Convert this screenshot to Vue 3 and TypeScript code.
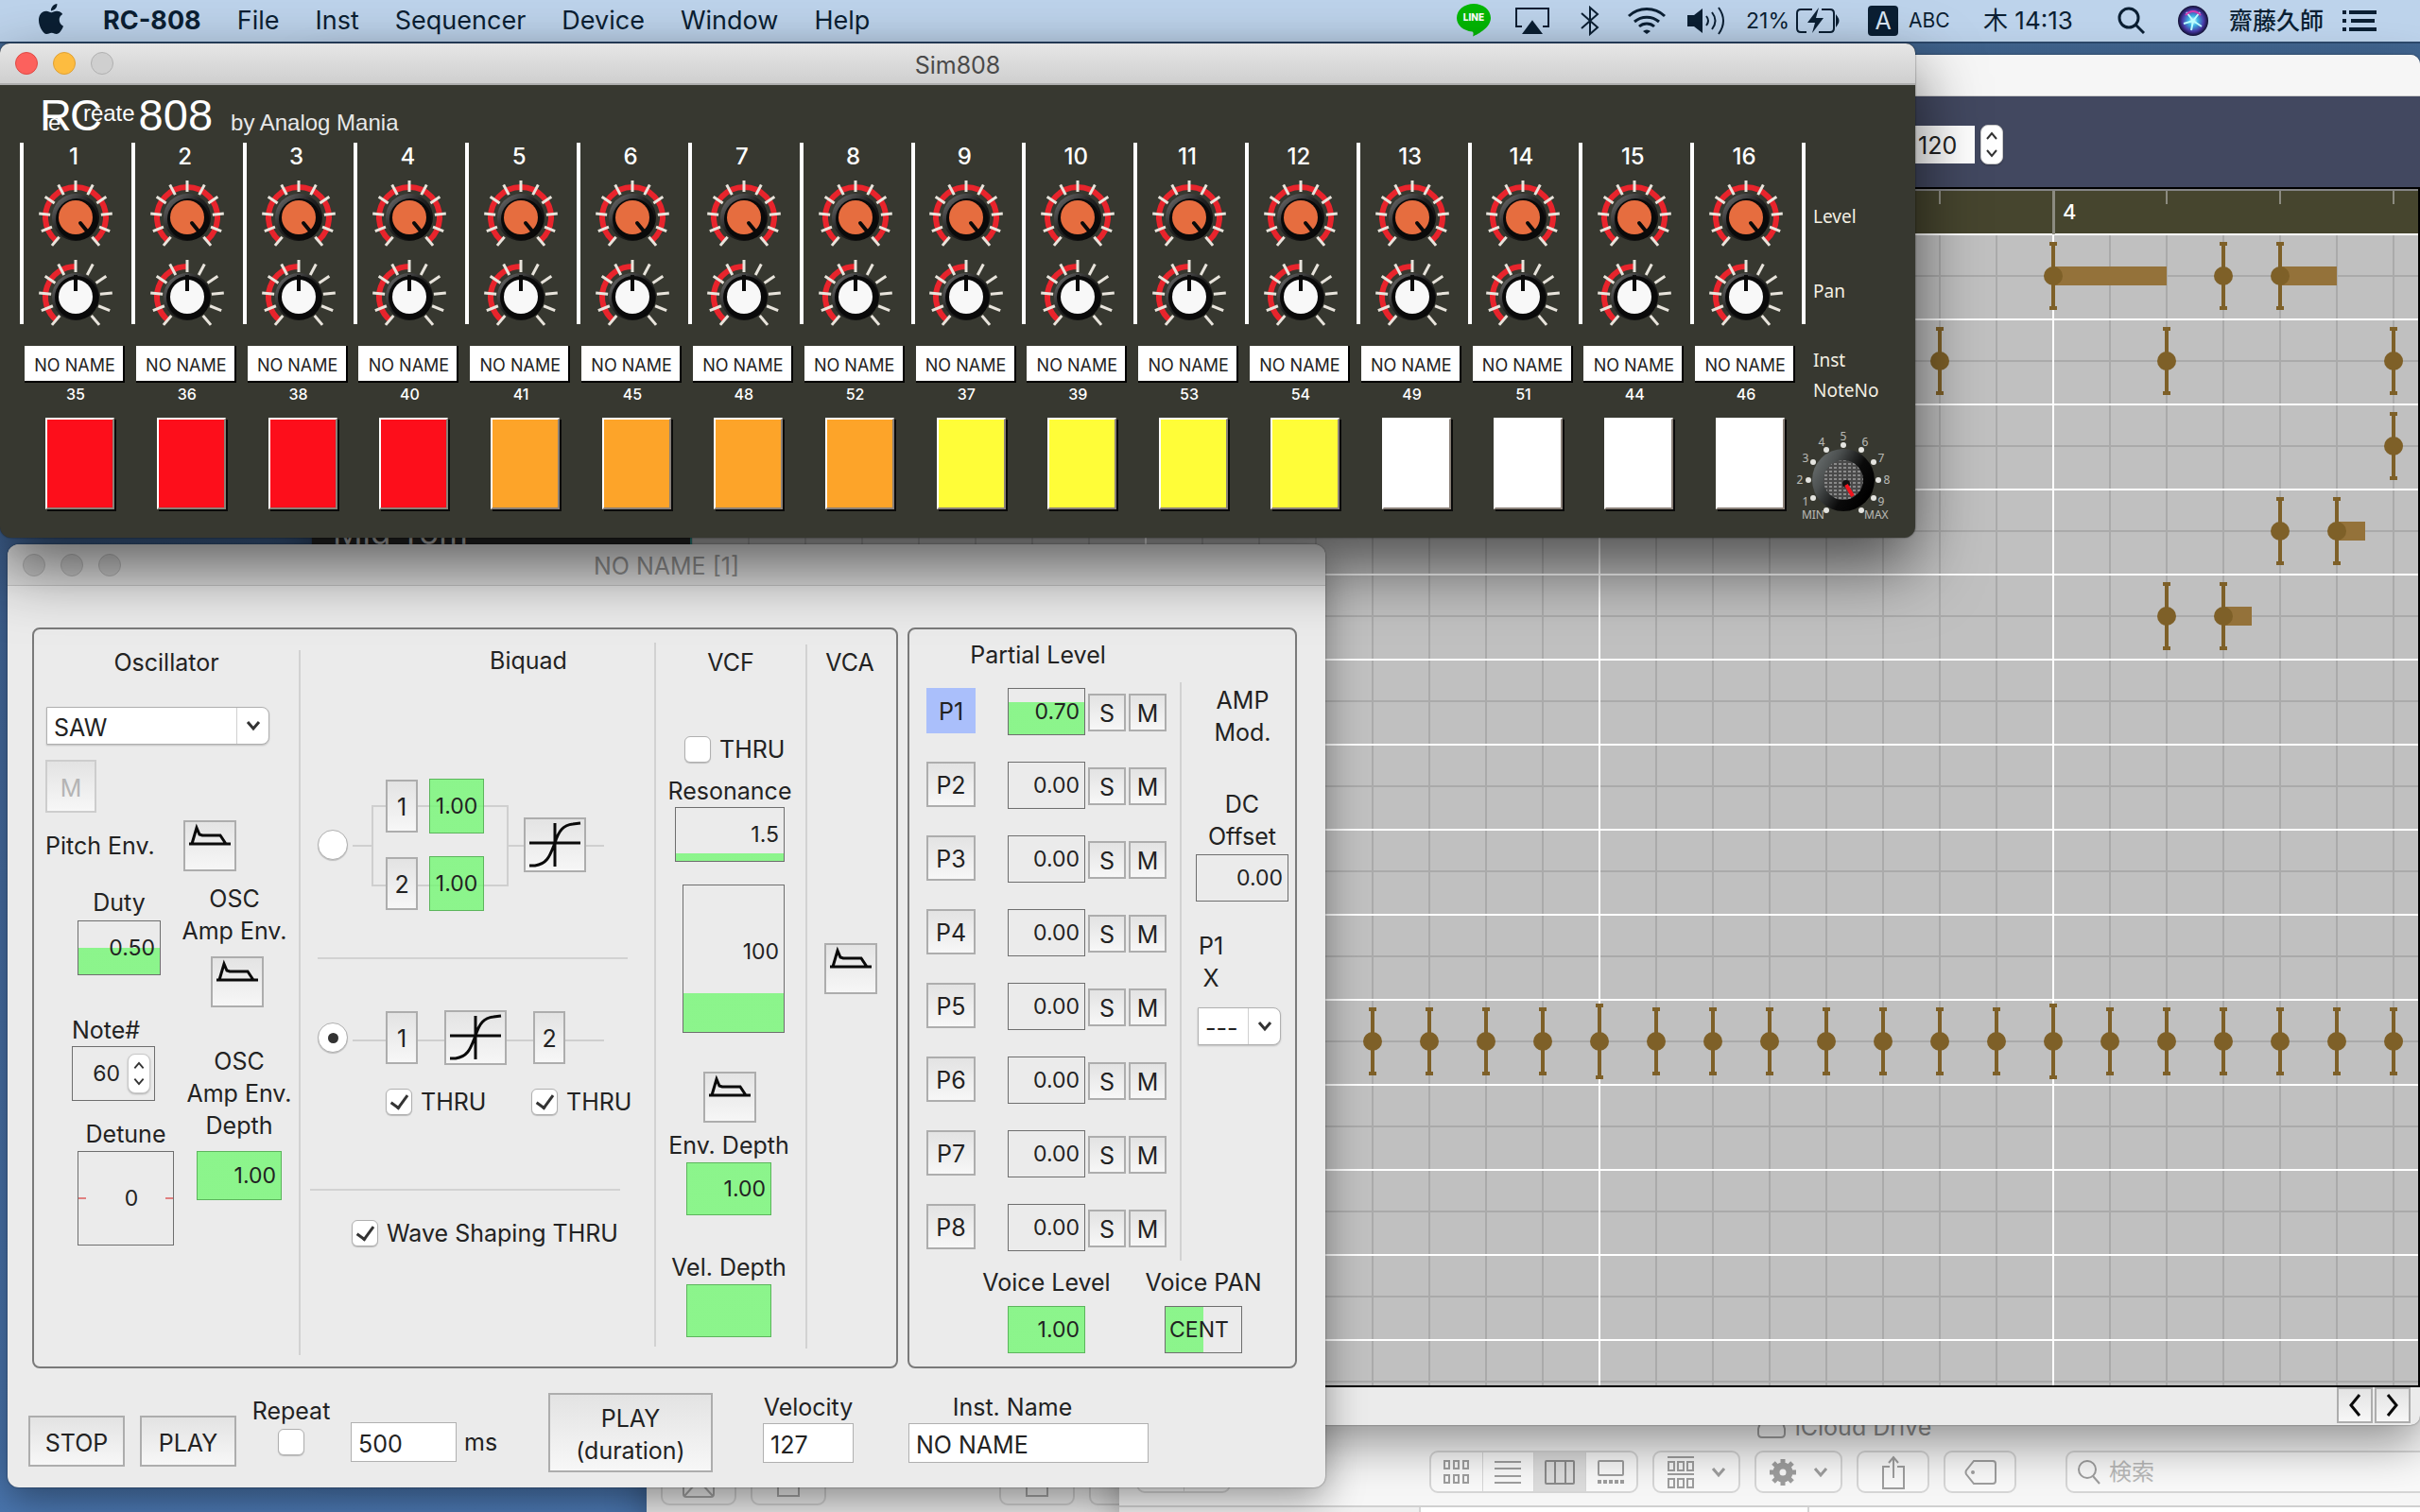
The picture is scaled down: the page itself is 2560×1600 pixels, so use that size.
<script setup lang="ts">
interface Channel {
  note: number
  color: string
}
interface Note {
  x: number
  y: number
  length?: number
  reach?: number
}

const menus: string[] = ['File', 'Inst', 'Sequencer', 'Device', 'Window', 'Help']

const noteNumbers: number[] = [35, 36, 38, 40, 41, 45, 48, 52, 37, 39, 53, 54, 49, 51, 44, 46]
const padColors: string[] = ['#fd0e1b', '#fda429', '#fffd38', '#ffffff']
const channels: Channel[] = noteNumbers.map((note, i) => ({
  note,
  color: padColors[Math.floor(i / 4)],
}))

// Tick marks run from -140 to 140 degrees in steps of 28.
const ticks: number[] = Array.from({ length: 11 }, (_, i) => -140 + i * 28)

const polar = (angle: number, r: number, cx = 50, cy = 50) => {
  const a = (angle * Math.PI) / 180
  return { x: Math.round(cx + r * Math.sin(a)), y: Math.round(cy - r * Math.cos(a)) }
}
const volumeMarks = ['', '1', '2', '3', '4', '5', '6', '7', '8', '9', ''].map((label, i) => {
  const angle = -150 + i * 30
  return { label, dot: polar(angle, 37), text: polar(angle, 46) }
})

// Sequencer canvas, in desktop coordinates.
const columns: number[] = Array.from({ length: 31 }, (_, i) => 732 + i * 60)
const rows: number[] = Array.from({ length: 13 }, (_, i) => 338 + i * 90)
const halfRows: number[] = Array.from({ length: 14 }, (_, i) => 292 + i * 90)
const bars: number[] = [1212, 1692, 2172]
const rulerTicks: number[] = Array.from({ length: 16 }, (_, i) => 732 + i * 120)

const notes: Note[] = [
  { x: 2172, y: 292, length: 120 },
  { x: 2352, y: 292 },
  { x: 2412, y: 292, length: 60 },
  { x: 2052, y: 382 },
  { x: 2292, y: 382 },
  { x: 2532, y: 382 },
  { x: 2532, y: 472 },
  { x: 2412, y: 562 },
  { x: 2472, y: 562, length: 30 },
  { x: 2292, y: 652 },
  { x: 2352, y: 652, length: 30 },
  ...Array.from({ length: 19 }, (_, i) => {
    const x = 1452 + i * 60
    return { x, y: 1102, reach: bars.includes(x) ? 40 : 36 }
  }),
]

const partials = [0.7, 0, 0, 0, 0, 0, 0, 0].map((level, i) => ({ name: `P${i + 1}`, level }))

const fill = (ratio: number) => ({
  backgroundImage: `linear-gradient(to top, rgba(116,247,116,.8) ${ratio * 100}%, transparent ${ratio * 100}%)`,
})
</script>

<template>
  <div class="desktop">
    <header class="menubar">
      <svg class="apple" viewBox="0 0 24 24" aria-hidden="true">
        <path
          fill="#0b1f33"
          d="M12.152 6.896c-.948 0-2.415-1.078-3.96-1.04-2.04.027-3.91 1.183-4.961 3.014-2.117 3.675-.546 9.103 1.519 12.09 1.013 1.454 2.208 3.09 3.792 3.039 1.52-.065 2.09-.987 3.935-.987 1.831 0 2.35.987 3.96.948 1.637-.026 2.676-1.48 3.676-2.948 1.156-1.688 1.636-3.325 1.662-3.415-.039-.013-3.182-1.221-3.22-4.857-.026-3.04 2.48-4.494 2.597-4.559-1.429-2.09-3.623-2.324-4.39-2.376-2-.156-3.675 1.09-4.61 1.09zM15.53 3.83c.843-1.012 1.4-2.427 1.245-3.83-1.207.052-2.662.805-3.532 1.818-.78.896-1.454 2.338-1.273 3.714 1.338.104 2.715-.688 3.559-1.701"
        />
      </svg>
      <nav class="menus">
        <strong>RC-808</strong>
        <a v-for="m in menus" :key="m" href="#">{{ m }}</a>
      </nav>
      <div class="status">
        <svg width="36" height="36" viewBox="0 0 36 36">
          <path fill="#04b804" d="M18 0C8 0 0 6.500 0 15c0 7.500 6.500 13.500 16.500 14.500 1.500.4 1.200 3 .6 5C23 32 36 25 36 15 36 6.500 28 0 18 0z" />
          <text x="18" y="18" text-anchor="middle" font-size="10" font-weight="800" fill="#fff">LINE</text>
        </svg>
        <svg class="s-air" width="36" height="30" viewBox="0 0 36 30" fill="none" stroke="#0b1f33" stroke-width="2">
          <path d="M7 21H1V2h34v19h-6" /><path d="M18 16l9 12H9z" fill="#0b1f33" />
        </svg>
        <svg class="s-bt" width="20" height="32" viewBox="0 0 20 32" fill="none" stroke="#0b1f33" stroke-width="2">
          <path d="M1 8l17 15-8 7V2l8 7L1 24" />
        </svg>
        <svg class="s-wifi" width="42" height="30" viewBox="0 0 42 30" fill="none" stroke="#0b1f33" stroke-width="3">
          <path d="M2 10a28 28 0 0 1 38 0M8 16a20 20 0 0 1 26 0M13 21a12 12 0 0 1 16 0" />
          <path d="M21 29l-4-3a6 6 0 0 1 8 0z" fill="#0b1f33" stroke="none" />
        </svg>
        <svg class="s-vol" width="41" height="32" viewBox="0 0 41 32" fill="none" stroke="#0b1f33" stroke-width="2">
          <path d="M1 10h7l9-7v26l-9-7H1z" fill="#0b1f33" stroke="none" />
          <path d="M21 11q4 5 0 10M27 7q7 9 0 18M34 2q10 14 0 28" />
        </svg>
        <span class="s-pct">21%</span>
        <svg class="s-bat" width="46" height="28" viewBox="0 0 46 28" fill="none" stroke="#0b1f33" stroke-width="2">
          <path d="M17 2H5q-4 0-4 4v16q0 4 4 4h6M27 2h9q4 0 4 4v16q0 4-4 4H24" />
          <path d="M24 0L12 16h8l-3 11 12-16h-8z" fill="#0b1f33" stroke="none" />
          <path d="M43 10q3 4 0 8z" fill="#0b1f33" />
        </svg>
        <span class="s-key">A</span>
        <span class="s-abc">ABC</span>
        <span class="s-date">木 14:13</span>
        <svg class="s-search" width="29" height="30" viewBox="0 0 29 30" fill="none" stroke="#0b1f33" stroke-width="3">
          <circle cx="12" cy="12" r="10" /><path d="M19 19l9 9" />
        </svg>
        <svg class="s-siri" width="32" height="32" viewBox="0 0 32 32">
          <defs>
            <radialGradient id="siri"><stop offset="0" stop-color="#fff" /><stop offset=".3" stop-color="#3bb8e6" /><stop offset=".7" stop-color="#4a3aa8" /><stop offset="1" stop-color="#101030" /></radialGradient>
          </defs>
          <circle cx="16" cy="16" r="16" fill="url(#siri)" />
          <path d="M16 16L9 7M16 16l7-9M16 16l-10 3M16 16l9 6M16 16l-2 10" stroke="#bff" stroke-width="2" />
          <path d="M8 10q8-8 16 0" stroke="#d33bb0" stroke-width="2" fill="none" />
        </svg>
        <span class="s-name">齋藤久師</span>
        <svg class="s-list" width="36" height="32" viewBox="0 0 36 32" fill="#0b1f33">
          <path d="M0 5h4v4H0zM7 5h29v4H7zM0 14h4v4H0zM9 14h25v4H9zM0 23h4v4H0zM7 23h29v4H7z" />
        </svg>
      </div>
    </header>

    <!-- Finder windows in the background -->
    <section class="window finder finder-a">
      <div class="finder-a-bar">
        <button aria-label="Mail"><svg width="34" height="28" viewBox="0 0 34 28" fill="none" stroke="#a0a0a0" stroke-width="2"><rect x="1" y="1" width="32" height="26" rx="3" /><path d="M2 26l11-12M32 26L21 14" /></svg></button>
        <button aria-label="New note"><svg width="24" height="26" viewBox="0 0 24 26" fill="none" stroke="#a0a0a0" stroke-width="2"><path d="M1 1v24h22V1" /></svg></button>
        <button class="far" aria-label="Archive"><svg width="24" height="26" viewBox="0 0 24 26" fill="none" stroke="#a0a0a0" stroke-width="2"><path d="M1 1v24h22V1" /></svg></button>
        <button aria-label="More"></button>
      </div>
    </section>

    <section class="window finder finder-b">
      <div class="finder-title">
        <svg width="30" height="24" viewBox="0 0 30 24" fill="none" stroke="#a0a0a0" stroke-width="2"><path d="M5 2L1 14v5q0 4 4 4h20q4 0 4-4v-5L25 2z" /></svg>
        <span>iCloud Drive</span>
      </div>
      <div class="finder-tools">
        <div class="seg nav"><button aria-label="Back"></button><button aria-label="Forward"></button></div>
        <div class="seg views">
          <button aria-label="Icons"><svg width="28" height="26" viewBox="0 0 28 26" fill="none" stroke="#9e9e9e" stroke-width="2"><path d="M1 1h5v8H1zM11 1h5v8h-5zM21 1h5v8h-5zM1 16h5v8H1zM11 16h5v8h-5zM21 16h5v8h-5z" /></svg></button>
          <button aria-label="List"><svg width="28" height="26" viewBox="0 0 28 26" stroke="#9e9e9e" stroke-width="2"><path d="M0 2h28M0 9h28M0 17h28M0 24h28" /></svg></button>
          <button class="on" aria-label="Columns"><svg width="32" height="26" viewBox="0 0 32 26" fill="none" stroke="#8a8a8a" stroke-width="2"><rect x="1" y="1" width="30" height="24" rx="1" /><path d="M11 1v24M22 1v24" /></svg></button>
          <button aria-label="Gallery"><svg width="28" height="26" viewBox="0 0 28 26" fill="none" stroke="#9e9e9e" stroke-width="2"><rect x="1" y="1" width="26" height="15" rx="1" /><path d="M0 23h28" stroke-width="4" stroke-dasharray="4 2" /></svg></button>
        </div>
        <button class="tool w94" aria-label="Group">
          <svg width="28" height="34" viewBox="0 0 28 34" fill="none" stroke="#9e9e9e" stroke-width="2"><path d="M0 1h28M0 19h28M1 6h6v9H1zM11 6h6v9h-6zM21 6h6v9h-6zM1 24h6v9H1zM11 24h6v9h-6zM21 24h6v9h-6z" /></svg>
          <svg width="16" height="12" viewBox="0 0 16 12" fill="none" stroke="#9e9e9e" stroke-width="3"><path d="M2 2l6 7 6-7" /></svg>
        </button>
        <button class="tool w94" aria-label="Actions">
          <svg width="28" height="28" viewBox="0 0 28 28" fill="none" stroke="#9e9e9e"><circle cx="14" cy="14" r="7" stroke-width="7" /><path d="M14 0v5M14 23v5M0 14h5M23 14h5M4 4l4 4M20 20l4 4M24 4l-4 4M8 20l-4 4" stroke-width="5" /></svg>
          <svg width="16" height="12" viewBox="0 0 16 12" fill="none" stroke="#9e9e9e" stroke-width="3"><path d="M2 2l6 7 6-7" /></svg>
        </button>
        <button class="tool w78" aria-label="Share"><svg width="24" height="36" viewBox="0 0 24 36" fill="none" stroke="#9e9e9e" stroke-width="2"><path d="M8 12H1v23h22V12h-7M12 24V2M7 8l5-6 5 6" /></svg></button>
        <button class="tool w78" aria-label="Tags"><svg width="34" height="26" viewBox="0 0 34 26" fill="none" stroke="#9e9e9e" stroke-width="2"><path d="M10 1h20q3 0 3 3v18q0 3-3 3H10L2 15q-1-2 0-4z" /><circle cx="9" cy="13" r="1" /></svg></button>
        <label class="search">
          <svg width="26" height="28" viewBox="0 0 26 28" fill="none" stroke="#9e9e9e" stroke-width="2"><circle cx="11" cy="11" r="9" /><path d="M17 18l7 8" /></svg>
          <input type="search" placeholder="検索" aria-label="検索" />
        </label>
      </div>
      <div class="finder-body"><div class="f-side"></div><div class="f-col"></div><div class="f-rest"></div></div>
    </section>

    <!-- Step sequencer -->
    <section class="window seq">
      <div class="seq-title"></div>
      <div class="seq-tools">
        <input class="bpm" type="text" value="120" aria-label="Tempo" />
        <button class="stepper" aria-label="Change tempo">
          <svg width="12" height="28" viewBox="0 0 12 28" fill="none" stroke="#333" stroke-width="2"><path d="M1 8l5-6 5 6M1 20l5 6 5-6" /></svg>
        </button>
      </div>
      <div class="seq-main">
        <div class="tracks"><span>Mid Tom</span></div>
        <svg class="roll">
          <g transform="translate(-732 -202)">
            <rect x="732" y="202" width="3000" height="46" fill="#46452e" />
            <rect x="732" y="247" width="3000" height="1300" fill="#c0c0c0" />
            <g fill="#aaaaaa">
              <rect v-for="y in halfRows" :key="y" x="732" :y="y - 1" width="3000" height="2" />
              <rect v-for="x in columns" :key="x" :x="x - 1" y="248" width="2" height="1300" />
            </g>
            <g fill="#fff">
              <rect x="732" y="247" width="3000" height="2" />
              <rect v-for="y in rows" :key="y" x="732" :y="y - 1" width="3000" height="2" />
              <rect v-for="x in bars" :key="x" :x="x - 1" y="248" width="2" height="1300" />
            </g>
            <g fill="#8c8b80">
              <rect v-for="x in rulerTicks" :key="x" :x="x - 1" y="202" width="2" height="14" />
              <rect v-for="x in bars" :key="x" :x="x - 1" y="202" width="3" height="46" />
            </g>
            <text x="2182" y="232" fill="#fff" font-size="22" font-weight="500">4</text>
            <g v-for="(n, i) in notes" :key="i" fill="#7e6028">
              <rect v-if="n.length" :x="n.x" :y="n.y - 10" :width="n.length" height="20" fill="#94723a" />
              <rect :x="n.x - 2" :y="n.y - (n.reach ?? 36)" width="4" :height="2 * (n.reach ?? 36)" />
              <rect :x="n.x - 4" :y="n.y - (n.reach ?? 36)" width="8" height="4" />
              <rect :x="n.x - 4" :y="n.y + (n.reach ?? 36) - 4" width="8" height="4" />
              <circle :cx="n.x" :cy="n.y" r="10" />
            </g>
          </g>
        </svg>
      </div>
      <div class="seq-foot">
        <button class="btn arrow" aria-label="Previous"><svg width="14" height="26" viewBox="0 0 14 26"><path d="M12 2L3 13l9 11" /></svg></button>
        <button class="btn arrow" aria-label="Next"><svg width="14" height="26" viewBox="0 0 14 26"><path d="M2 2l9 11-9 11" /></svg></button>
      </div>
    </section>

    <!-- Voice editor -->
    <section class="window editor">
      <div class="titlebar off">
        <i class="light"></i><i class="light"></i><i class="light"></i>
        <h2>NO NAME [1]</h2>
      </div>
      <div class="panels">
        <div class="panel">
          <div class="col osc">
            <h3>Oscillator</h3>
            <div class="combo wide">
              <select aria-label="Waveform"><option>SAW</option></select>
              <span class="arrow-part"><svg width="16" height="12" viewBox="0 0 16 12" fill="none" stroke="#333" stroke-width="3"><path d="M2 2l6 7 6-7" /></svg></span>
            </div>
            <button class="btn mute" disabled>M</button>
            <div class="pitch">
              <span>Pitch Env.</span>
              <button class="btn env" aria-label="Pitch envelope"><svg viewBox="0 0 56 54"><path d="M6 25h44M9 25l5-17 3 7 3 1h19l6 9" /></svg></button>
            </div>
            <div class="osc-split">
              <div class="osc-left">
                <label class="field duty">Duty<input class="meter" type="text" value="0.50" :style="fill(0.5)" /></label>
                <label class="field noteno">Note#
                  <span class="spin">
                    <input type="text" value="60" />
                    <button class="stepper" aria-label="Change note"><svg width="12" height="26" viewBox="0 0 12 28" fill="none" stroke="#333" stroke-width="2"><path d="M1 8l5-6 5 6M1 20l5 6 5-6" /></svg></button>
                  </span>
                </label>
                <label class="field detune">Detune<input class="meter" type="text" value="0" /></label>
              </div>
              <div class="osc-right">
                <span class="amp-env">OSC<br />Amp Env.</span>
                <button class="btn env" aria-label="Amp envelope"><svg viewBox="0 0 56 54"><path d="M6 25h44M9 25l5-17 3 7 3 1h19l6 9" /></svg></button>
                <label class="field depth">OSC<br />Amp Env.<br />Depth<input class="meter full" type="text" value="1.00" :style="fill(1)" /></label>
              </div>
            </div>
          </div>
          <div class="rule r1"></div>

          <div class="col biquad">
            <h3>Biquad</h3>
            <div class="route para">
              <svg class="wires" width="304" height="140" viewBox="0 0 304 140"><path d="M37 71h20M58 28v86M58 29h144M58 113h144M201 28v86M202 71h101" /></svg>
              <input type="radio" name="route" aria-label="Parallel filters" />
              <div class="stack s26">
                <button class="btn num">1</button>
                <button class="btn num">2</button>
              </div>
              <div class="stack s24">
                <input class="meter full mid" type="text" value="1.00" aria-label="Filter 1 gain" :style="fill(1)" />
                <input class="meter full mid" type="text" value="1.00" aria-label="Filter 2 gain" :style="fill(1)" />
              </div>
              <button class="btn shape" aria-label="Wave shaper"><svg viewBox="0 0 66 58"><path d="M6 27h54M33 6v46M6 51h6c14-2 16-12 21-24C37 14 42 8 52 7l8-1" /></svg></button>
            </div>
            <div class="hr"></div>
            <div class="route serial">
              <svg class="wires" width="304" height="60" viewBox="0 0 304 60"><path d="M37 33h266" /></svg>
              <input type="radio" name="route" aria-label="Serial filters" checked />
              <button class="btn num">1</button>
              <button class="btn shape" aria-label="Wave shaper"><svg viewBox="0 0 66 58"><path d="M6 27h54M33 6v46M6 51h6c14-2 16-12 21-24C37 14 42 8 52 7l8-1" /></svg></button>
              <button class="btn num">2</button>
            </div>
            <div class="thrus">
              <label class="check"><input type="checkbox" checked />THRU</label>
              <label class="check"><input type="checkbox" checked />THRU</label>
            </div>
            <div class="hr low"></div>
            <label class="check shaping"><input type="checkbox" checked />Wave Shaping THRU</label>
          </div>
          <div class="rule r2"></div>

          <div class="col vcf">
            <h3>VCF</h3>
            <label class="check"><input type="checkbox" />THRU</label>
            <label class="field reso">Resonance<input class="meter" type="text" value="1.5" :style="fill(0.15)" /></label>
            <input class="meter cutoff" type="text" value="100" aria-label="Cutoff" :style="fill(0.27)" />
            <button class="btn env" aria-label="Filter envelope"><svg viewBox="0 0 56 54"><path d="M6 25h44M9 25l5-17 3 7 3 1h19l6 9" /></svg></button>
            <label class="field fdepth">Env. Depth<input class="meter full" type="text" value="1.00" :style="fill(1)" /></label>
            <label class="field vdepth">Vel. Depth<input class="meter full" type="text" value="" :style="fill(1)" /></label>
          </div>
          <div class="rule r3"></div>

          <div class="col vca">
            <h3>VCA</h3>
            <button class="btn env" aria-label="VCA envelope"><svg viewBox="0 0 56 54"><path d="M6 25h44M9 25l5-17 3 7 3 1h19l6 9" /></svg></button>
          </div>
        </div>

        <div class="panel levels">
          <h3>Partial Level</h3>
          <div class="levels-main">
            <div class="partials">
              <div v-for="(p, i) in partials" :key="p.name" class="partial">
                <button class="btn pname" :class="{ active: i === 0 }">{{ p.name }}</button>
                <input class="meter" type="text" :value="p.level.toFixed(2)" :aria-label="p.name + ' level'" :style="p.level ? fill(p.level) : {}" />
                <button class="btn sm">S</button>
                <button class="btn sm">M</button>
              </div>
            </div>
            <div class="rule r4"></div>
            <div class="amp">
              <span>AMP<br />Mod.</span>
              <label class="field dc">DC<br />Offset<input class="meter" type="text" value="0.00" /></label>
              <span class="px">P1<br />X</span>
              <div class="combo small">
                <select aria-label="Modulation partner"><option>---</option></select>
                <span class="arrow-part"><svg width="16" height="12" viewBox="0 0 16 12" fill="none" stroke="#333" stroke-width="3"><path d="M2 2l6 7 6-7" /></svg></span>
              </div>
            </div>
          </div>
          <div class="voice">
            <label class="field">Voice Level<input class="meter full" type="text" value="1.00" :style="fill(1)" /></label>
            <label class="field">Voice PAN<input class="meter pan" type="text" value="CENT" /></label>
          </div>
        </div>
      </div>

      <div class="transport">
        <button class="btn big">STOP</button>
        <button class="btn big">PLAY</button>
        <label class="repeat">Repeat<input type="checkbox" /></label>
        <label class="ms"><input class="text" type="text" value="500" />ms</label>
        <button class="btn duration">PLAY<br />(duration)</button>
        <label class="entry velocity">Velocity<input class="text" type="text" value="127" /></label>
        <label class="entry inst"><span>Inst. Name</span><input class="text" type="text" value="NO NAME" /></label>
      </div>
    </section>

    <!-- Drum machine -->
    <section class="window sim">
      <div class="titlebar">
        <i class="light red"></i><i class="light amber"></i><i class="light"></i>
        <h2>Sim808</h2>
      </div>
      <div class="logo">
        <span class="big-r">R<small class="sub-e">e</small></span><span class="big-c">C</span><small class="reate">reate</small><span class="n808">808</span>
        <span class="by">by Analog Mania</span>
      </div>
      <div class="rack">
        <div class="channels">
          <div v-for="(c, i) in channels" :key="i" class="channel">
            <div class="strip">
              <b>{{ i + 1 }}</b>
              <svg class="knob" width="80" height="72" viewBox="0 0 80 72">
                <path d="M20 65A32 32 0 1 1 60 65" fill="none" stroke="#e8242c" stroke-width="6" />
                <path v-for="t in ticks" :key="t" d="M40 1v12" :transform="`rotate(${t} 40 40)`" stroke="#e8e4dc" stroke-width="3" />
                <circle cx="40" cy="40" r="25" fill="url(#rim)" />
                <circle cx="41" cy="42" r="22" fill="#0a0a0a" />
                <circle cx="40" cy="40" r="18" fill="#e66d3f" />
                <path d="M45 46l9 11" stroke="#0a0a0a" stroke-width="4" stroke-linecap="round" />
              </svg>
              <svg class="knob pan-knob" width="80" height="72" viewBox="0 0 80 72">
                <path d="M20 65A32 32 0 0 1 40 8" fill="none" stroke="#e8242c" stroke-width="6" />
                <path v-for="t in ticks" :key="t" d="M40 1v13" :transform="`rotate(${t} 40 40)`" stroke="#e8e4dc" stroke-width="3" />
                <circle cx="40" cy="40" r="25" fill="url(#rim)" />
                <circle cx="41" cy="41" r="23" fill="#0a0a0a" />
                <circle cx="40" cy="40" r="18" fill="#f8f8f8" />
                <path d="M40 17v17" stroke="#0a0a0a" stroke-width="4" />
              </svg>
            </div>
            <button class="inst-btn">NO NAME</button>
            <span class="note">{{ c.note }}</span>
            <button class="pad" :style="{ backgroundColor: c.color }" :aria-label="`Pad ${i + 1}`"></button>
          </div>
        </div>
        <div class="legend">
          <span class="l-level">Level</span>
          <span class="l-pan">Pan</span>
          <span class="l-inst">Inst</span>
          <span class="l-note">NoteNo</span>
          <svg width="102" height="100" viewBox="0 0 102 100">
            <defs>
              <linearGradient id="rim" x1="0" y1="0" x2="1" y2="1"><stop offset="0" stop-color="#777" /><stop offset=".45" stop-color="#222" /><stop offset="1" stop-color="#000" /></linearGradient>
              <linearGradient id="dial" x1="0" y1="0" x2="1" y2=".6"><stop offset="0" stop-color="#747a7a" /><stop offset=".35" stop-color="#4c5050" /><stop offset=".7" stop-color="#0a0a0a" /><stop offset="1" stop-color="#000" /></linearGradient>
              <pattern id="mesh" width="5" height="4" patternUnits="userSpaceOnUse"><rect width="5" height="4" fill="#4a4a4a" /><rect width="3" height="2" fill="#8a8a8a" /></pattern>
            </defs>
            <circle cx="50" cy="50" r="33" fill="url(#dial)" />
            <circle cx="50" cy="50" r="21" fill="url(#mesh)" />
            <circle cx="53" cy="54" r="4" fill="#111" />
            <path d="M53 55l7 12" stroke="#f0141e" stroke-width="4" />
            <g fill="#e4e4e0" font-size="12">
              <g v-for="(m, i) in volumeMarks" :key="i">
                <circle :cx="m.dot.x" :cy="m.dot.y" r="3" />
                <text :x="m.text.x" :y="m.text.y + 4" text-anchor="middle" opacity=".75">{{ m.label }}</text>
              </g>
              <text x="30" y="91" text-anchor="end" opacity=".75">MIN</text>
              <text x="72" y="91" opacity=".75">MAX</text>
            </g>
          </svg>
        </div>
      </div>
    </section>
  </div>
</template>

<style>
body {
  margin: 0;
  background: #4a75ae;
}
</style>

<style scoped>
.desktop,
.desktop * {
  box-sizing: border-box;
}
.desktop {
  position: relative;
  height: 100vh;
  overflow: hidden;
  background: linear-gradient(#41658f, #44699c 40%, #4a76af);
  font: 25px/34px Inter, 'Noto Sans CJK JP', sans-serif;
  color: #222;
}
button,
input,
select {
  margin: 0;
  padding: 0;
  font: inherit;
  color: inherit;
  outline: none;
}
h2,
h3 {
  margin: 0;
  font: inherit;
}
svg {
  flex: none;
  display: block;
}

/* Menu bar */
.menubar {
  display: flex;
  align-items: center;
  height: 46px;
  padding: 0 46px 0 38px;
  background: #bdd3eb;
  border-bottom: 2px solid #2d4a6d;
  font-size: 27px;
  color: #0b1f33;
  white-space: nowrap;
}
.apple {
  width: 32px;
  height: 32px;
  margin: -4px 39px 0 0;
}
.menus {
  display: flex;
  gap: 38px;
}
.menus a {
  color: inherit;
  text-decoration: none;
}
.status {
  display: flex;
  align-items: center;
  margin-left: auto;
  font-size: 23px;
}
.s-air { margin-left: 26px; }
.s-bt { margin-left: 33px; }
.s-wifi { margin-left: 29px; }
.s-vol { margin-left: 21px; }
.s-pct { margin-left: 22px; width: 53px; }
.s-key {
  width: 32px;
  height: 32px;
  margin-left: 30px;
  border-radius: 4px;
  background: #0b1f33;
  color: #dce8f5;
  font-size: 25px;
  line-height: 32px;
  text-align: center;
}
.s-abc { margin-left: 11px; width: 43px; font-size: 21px; }
.s-date { margin-left: 36px; width: 100px; font-size: 26px; }
.s-search { margin-left: 42px; }
.s-siri { margin-left: 35px; }
.s-name { margin-left: 22px; width: 100px; font-size: 25px; font-weight: 500; }
.s-list { margin-left: 20px; }

/* Window chrome */
.window {
  position: absolute;
  border-radius: 10px;
  overflow: hidden;
}
.titlebar {
  position: relative;
  display: flex;
  align-items: center;
  gap: 16px;
  height: 44px;
  padding-left: 16px;
  background: linear-gradient(#e6e6e6, #cfcfcf);
  border-bottom: 2px solid #aeaeae;
  color: #4a4a4a;
}
.titlebar h2 {
  position: absolute;
  inset: 0;
  line-height: 46px;
  text-align: center;
}
.light {
  width: 24px;
  height: 24px;
  border-radius: 50%;
  background: #cfcfcf;
  border: 1px solid #b0b0b0;
}
.light.red { background: #fc615d; border-color: #de4a45; }
.light.amber { background: #fdbc40; border-color: #dea034; }

/* Finder */
.finder {
  border-radius: 0;
  background: #f6f6f6;
  box-shadow: 0 10px 40px rgba(0, 0, 0, .35);
}
.finder-a {
  left: 684px;
  right: 1320px;
  bottom: 0;
  height: 100px;
  background: #e6e6e6;
}
.finder-a-bar {
  display: flex;
  gap: 15px;
  padding: 48px 0 0 15px;
}
.finder-a-bar button {
  display: flex;
  align-items: center;
  justify-content: center;
  flex: none;
  width: 80px;
  height: 45px;
  border: 2px solid #cacaca;
  border-radius: 9px;
  background: transparent;
}
.finder-a-bar .far { margin-left: 168px; }
.finder-b {
  left: 1184px;
  right: 0;
  bottom: 0;
  height: 110px;
}
.finder-title {
  display: flex;
  align-items: center;
  justify-content: center;
  gap: 10px;
  height: 45px;
  padding: 0 0 6px 158px;
  color: #8c8c8c;
}
.finder-tools {
  display: flex;
  gap: 15px;
  height: 60px;
  padding-left: 18px;
  margin-right: -20px;
  border-bottom: 2px solid #d0d0d0;
}
.seg,
.tool,
.search {
  display: flex;
  height: 45px;
  border: 2px solid #d6d6d6;
  border-radius: 9px;
  background: #f9f9f9;
  overflow: hidden;
  flex: none;
}
.seg button {
  display: flex;
  align-items: center;
  justify-content: center;
  flex: 1;
  border: 0;
  background: transparent;
}
.seg button + button { border-left: 1px solid #d6d6d6; }
.seg .on { background: #dcdcdc; }
.nav { width: 100px; }
.views { width: 221px; margin-left: 195px; }
.tool {
  align-items: center;
  justify-content: center;
  gap: 18px;
}
.w94 { width: 93px; }
.w78 { width: 77px; }
.search {
  flex: 1;
  align-items: center;
  gap: 8px;
  padding-left: 10px;
  margin-left: 37px;
}
.search input {
  border: 0;
  background: none;
  flex: 1;
  font-size: 24px;
}
.search input::placeholder { color: #b8b8b8; }
.finder-body {
  display: flex;
  height: 5px;
  background: #fff;
}
.f-side { width: 319px; background: #f0f0f0; border-right: 2px solid #d4d4d4; }
.f-col { width: 411px; border-right: 2px solid #d4d4d4; }

/* Sequencer */
.seq {
  top: 58px;
  left: 330px;
  right: 0;
  background: #ebebeb;
  box-shadow: 0 20px 50px rgba(0, 0, 0, .4), 0 0 2px rgba(0, 0, 0, .5);
}
.seq-title {
  height: 44px;
  background: #f6f6f6;
  border-bottom: 1px solid #d0d0d0;
}
.seq-tools {
  display: flex;
  align-items: center;
  justify-content: flex-end;
  gap: 6px;
  height: 96px;
  padding: 6px 441px 0 0;
  background: #424860;
}
.bpm {
  width: 94px;
  height: 40px;
  padding: 2px 0 0 34px;
  border: 0;
  background: #fff;
}
.stepper {
  display: flex;
  align-items: center;
  justify-content: center;
  width: 24px;
  height: 42px;
  border: 1px solid #c8c8c8;
  border-radius: 8px;
  background: #fff;
  box-shadow: 0 1px 2px rgba(0, 0, 0, .25);
}
.seq-main {
  display: flex;
  border: 2px solid #000;
  border-left: 0;
}
.tracks {
  width: 402px;
  flex: none;
  background: #262626;
  border-right: 2px solid #2f8f8a;
  padding: 318px 0 0 22px;
}
.tracks span {
  display: block;
  height: 90px;
  line-height: 90px;
  color: #c8c8c8;
  font-size: 35px;
}
.roll {
  flex: 1;
  min-width: 0;
  height: 1266px;
  border-top: 2px solid #858585;
}
.seq-foot {
  display: flex;
  justify-content: flex-end;
  gap: 2px;
  padding-right: 10px;
  height: 40px;
}

/* Controls */
.btn {
  display: flex;
  align-items: center;
  justify-content: center;
  flex: none;
  border: 2px solid #adadad;
  border-radius: 0;
  background: linear-gradient(#e3e3e3, #f7f7f7);
  text-align: center;
}
.btn svg {
  width: 100%;
  height: 100%;
  fill: none;
  stroke: #0a0a0a;
  stroke-width: 3;
}
.arrow { width: 38px; height: 38px; }
.btn.arrow svg { width: 14px; height: 26px; }
.env { width: 56px; height: 54px; }
.env,
.shape { border: 0; box-shadow: inset 0 0 0 2px #adadad; }
.num { width: 34px; height: 56px; padding-top: 2px; }
.shape { width: 66px; height: 58px; }
.meter {
  display: block;
  flex: none;
  padding-right: 5px;
  border: 1px solid #6e6e6e;
  border-radius: 0;
  background-color: transparent;
  background-origin: border-box;
  font-size: 23px;
  text-align: right;
}
.full { border-color: #5cb55c; }
.mid { width: 58px; height: 58px; padding: 0; text-align: center; }
.field {
  display: flex;
  flex-direction: column;
  align-items: center;
  text-align: center;
  white-space: nowrap;
}
.combo {
  position: relative;
  height: 40px;
  border: 1px solid #b0b0b0;
  border-radius: 0 8px 8px 0;
  background: #fff;
  box-shadow: 0 1px 2px rgba(0, 0, 0, .2);
}
.combo select {
  width: 100%;
  height: 38px;
  padding: 4px 0 0 7px;
  border: 0;
  background: none;
  appearance: none;
}
.arrow-part {
  position: absolute;
  top: 0;
  right: 0;
  bottom: 0;
  display: flex;
  align-items: center;
  justify-content: center;
  width: 34px;
  border-left: 1px solid #d0d0d0;
  pointer-events: none;
}
.wide { width: 236px; margin: 30px 0 0 13px; }
.small { width: 88px; margin: 14px 0 0 17px; }
.check {
  display: flex;
  align-items: center;
  flex: none;
  gap: 9px;
  white-space: nowrap;
}
input[type='checkbox'],
input[type='radio'] {
  display: flex;
  align-items: center;
  justify-content: center;
  flex: none;
  appearance: none;
  width: 28px;
  height: 28px;
  border: 1px solid #b0b0b0;
  border-radius: 6px;
  background: #fff;
  box-shadow: 0 1px 1px rgba(0, 0, 0, .2);
}
input[type='radio'] {
  width: 32px;
  height: 32px;
  border-radius: 50%;
}
input[type='checkbox']:checked::before {
  content: '';
  width: 8px;
  height: 15px;
  margin-top: -4px;
  border: solid #333;
  border-width: 0 3px 3px 0;
  transform: rotate(36deg);
}
input[type='radio']:checked::before {
  content: '';
  width: 11px;
  height: 11px;
  border-radius: 50%;
  background: #333;
}

/* Editor */
.editor {
  top: 576px;
  left: 8px;
  background: #ebebeb;
  border-radius: 12px;
  box-shadow: 0 12px 40px rgba(0, 0, 0, .4), 0 0 2px rgba(0, 0, 0, .5);
}
.titlebar.off {
  background: #dedede;
  border-bottom: 1px solid #c4c4c4;
  color: #8f8f8f;
}
.off .light { background: #c8c8c8; border-color: #b2b2b2; }
.panels {
  display: flex;
  gap: 10px;
  padding: 44px 30px 0 26px;
}
.panel {
  display: flex;
  height: 784px;
  border: 2px solid #7a7a7a;
  border-radius: 8px;
}
.rule {
  width: 2px;
  flex: none;
  background: #d2d2d2;
}
.r1 { margin: 22px 0 12px; }
.r2 { margin: 14px 0 21px; }
.r3 { margin: 16px 0 19px; }
.col h3 { text-align: center; margin-top: 18px; }

.osc { width: 280px; }
.mute { width: 54px; height: 56px; margin: 16px 0 0 12px; padding-top: 4px; color: #b4b4b4; border-color: #cdcdcd; }
.pitch {
  display: flex;
  align-items: center;
  gap: 30px;
  margin: 8px 0 0 12px;
}
.pitch span { width: 116px; white-space: nowrap; }
.osc-split { display: flex; }
.osc-left { width: 150px; padding-top: 16px; }
.osc-right {
  display: flex;
  flex-direction: column;
  align-items: center;
  width: 130px;
  padding-top: 12px;
  text-align: center;
  white-space: nowrap;
}
.amp-env { padding-right: 6px; }
.osc-right .env { margin-top: 10px; }
.duty { width: 88px; margin-left: 46px; }
.duty .meter { width: 88px; height: 58px; margin-top: 2px; }
.noteno { width: 88px; margin: 41px 0 0 40px; align-items: flex-start; }
.spin {
  display: flex;
  align-items: center;
  gap: 8px;
  width: 88px;
  height: 58px;
  padding-right: 4px;
  border: 1px solid #6e6e6e;
}
.spin input {
  flex: 1;
  min-width: 0;
  border: 0;
  background: none;
  font-size: 23px;
  text-align: right;
}
.detune { width: 102px; margin: 18px 0 0 46px; }
.detune .meter {
  width: 102px;
  height: 100px;
  margin-top: 1px;
  padding: 0 0 0 12px;
  text-align: center;
  background: linear-gradient(#e08080, #e08080) 0 50% / 8px 2px no-repeat, linear-gradient(#e08080, #e08080) 100% 50% / 8px 2px no-repeat;
}
.depth { margin-top: 40px; padding-left: 4px; }
.depth .meter { width: 90px; height: 52px; margin-top: 10px; }

.biquad { width: 374px; }
.biquad h3 { padding-left: 108px; margin-top: 16px; }
.route {
  position: relative;
  display: flex;
  align-items: center;
  margin-left: 18px;
}
.wires {
  position: absolute;
  left: 0;
  top: 0;
  fill: none;
  stroke: #cfcfcf;
  stroke-width: 2;
}
.route > *:not(.wires) { position: relative; }
.para { height: 140px; margin-top: 108px; }
.stack { display: flex; flex-direction: column; }
.s26 { gap: 26px; margin-left: 40px; }
.s24 { gap: 24px; margin: 0 42px 0 12px; }
.hr { width: 328px; height: 2px; margin: 49px 0 0 18px; background: #d2d2d2; }
.serial { gap: 28px; height: 60px; margin-top: 53px; }
.serial input { margin-right: 12px; }
.thrus { display: flex; margin: 21px 0 0 90px; }
.thrus .check { width: 154px; }
.low { margin: 75px 0 0 10px; }
.shaping { margin: 28px 0 0 54px; }

.vcf { width: 158px; }
.vcf .check { margin: 58px 0 0 30px; }
.reso { margin: 10px 2px 0 0; }
.reso .meter { width: 116px; height: 58px; }
.cutoff { width: 108px; height: 157px; margin: 24px 0 0 28px; padding-bottom: 16px; }
.vcf .env { margin: 41px 0 0 50px; }
.fdepth { margin: 7px 4px 0 0; }
.fdepth .meter,
.vdepth .meter { width: 90px; height: 56px; margin-top: 1px; }
.vdepth { margin: 38px 4px 0 0; }

.vca { width: 94px; }
.vca h3 { padding-right: 4px; }
.vca .env { margin: 280px 0 0 18px; }

.levels { flex-direction: column; width: 412px; }
.levels > h3 { margin: 10px 136px 0 0; text-align: center; }
.levels-main { display: flex; margin-top: 12px; }
.partials {
  display: flex;
  flex-direction: column;
  gap: 28px;
  width: 286px;
  padding: 6px 0 0 18px;
}
.partial {
  display: flex;
  align-items: center;
  height: 50px;
}
.pname { width: 52px; height: 48px; margin: 0 34px 2px 0; padding-top: 2px; }
.pname.active { background: #aabffb; border-color: #aabffb; }
.partial .meter { width: 82px; height: 50px; }
.sm { width: 40px; height: 40px; margin: 2px 0 0 3px; padding-top: 2px; }
.r4 { height: 612px; }
.amp { width: 120px; padding-top: 2px; }
.amp > span { display: block; text-align: center; padding-left: 9px; }
.dc { margin-top: 42px; padding-left: 8px; }
.dc .meter { width: 98px; height: 50px; margin-top: 2px; }
.amp .px { width: 62px; margin-top: 30px; padding: 0; }
.voice { display: flex; margin: 6px 0 0 62px; }
.voice .field { width: 166px; }
.voice .meter { width: 82px; height: 50px; margin-top: 8px; }
.voice .pan {
  padding-left: 4px;
  text-align: left;
  background-image: linear-gradient(to right, rgba(116, 247, 116, .8) 50%, transparent 50%);
}

.transport {
  display: flex;
  align-items: flex-start;
  height: 126px;
  padding-left: 22px;
  white-space: nowrap;
}
.big { width: 102px; height: 54px; margin: 50px 16px 0 0; padding-top: 4px; }
.repeat {
  display: flex;
  flex-direction: column;
  align-items: center;
  gap: 2px;
  width: 84px;
  margin-top: 28px;
}
.text {
  height: 42px;
  padding: 4px 0 0 7px;
  border: 1px solid #b0b0b0;
  border-radius: 0;
  background: #fff;
}
.ms {
  display: flex;
  align-items: center;
  gap: 8px;
  width: 156px;
  margin: 57px 0 0 21px;
}
.ms .text { width: 112px; }
.duration { width: 174px; height: 84px; margin: 26px 53px 0; padding-top: 4px; }
.entry {
  display: flex;
  flex-direction: column;
  align-items: center;
  margin-top: 24px;
}
.velocity { width: 96px; margin-right: 58px; }
.inst { width: 254px; align-items: flex-start; }
.inst span { width: 220px; text-align: center; }
.entry .text { width: 100%; }

/* Drum machine */
.sim {
  top: 46px;
  left: 0;
  right: 534px;
  background: #373830;
  border-radius: 10px 10px 12px 12px;
  box-shadow: 0 30px 70px rgba(0, 0, 0, .6), 0 0 2px rgba(0, 0, 0, .6);
}
.logo {
  display: flex;
  align-items: baseline;
  height: 61px;
  padding-left: 42px;
  font: 47px/64px 'Liberation Sans', sans-serif;
  color: #fff;
}
.big-r { position: relative; }
.sub-e {
  position: absolute;
  left: 9px;
  bottom: 12px;
  font-size: 24px;
  line-height: 24px;
}
.big-c { margin-left: -2px; }
.reate { position: relative; bottom: 10px; margin: 0 4px 0 -20px; font-size: 24px; }
.by { margin-left: 19px; font-size: 24px; color: #e8e8e8; }
.rack {
  display: flex;
  padding: 0 0 28px 21px;
}
.channels {
  flex: 1;
  display: grid;
  grid-template-columns: repeat(16, 1fr);
}
.strip {
  display: flex;
  flex-direction: column;
  align-items: center;
  height: 192px;
  padding-right: 4px;
  border-left: 4px solid #fff;
}
.channel:last-child .strip {
  margin-right: -4px;
  border-right: 4px solid #fff;
}
.strip b {
  flex: none;
  height: 39px;
  padding-right: 4px;
  font-size: 24px;
  font-weight: 500;
  line-height: 30px;
  color: #fff;
}
.knob { overflow: visible; }
.pan-knob { margin-top: 12px; }
.inst-btn {
  display: block;
  width: 106px;
  height: 39px;
  margin: 23px 0 0 5px;
  padding-top: 3px;
  border: 0;
  background: #fff;
  box-shadow: inset -2px -2px #000;
  font-size: 18px;
  color: #222;
}
.note {
  display: block;
  height: 22px;
  margin-top: 1px;
  font-size: 16px;
  font-weight: 500;
  line-height: 22px;
  text-align: center;
  color: #fff;
}
.pad {
  display: block;
  width: 73px;
  height: 97px;
  margin: 14px 0 2px 27px;
  border: 2px solid;
  border-color: #fff #8a8078 #8a8078 #fff;
  box-shadow: 2px 2px #0a0a0a;
}
.legend {
  display: flex;
  flex-direction: column;
  width: 120px;
  padding-left: 12px;
  font: 19px/24px 'Noto Sans', sans-serif;
  color: #f4f0e4;
}
.l-level { margin-top: 66px; }
.l-pan { margin-top: 55px; }
.l-inst { margin-top: 49px; }
.l-note { margin-top: 8px; }
.legend svg { margin: 33px 0 -28px -18px; overflow: visible; }
</style>
